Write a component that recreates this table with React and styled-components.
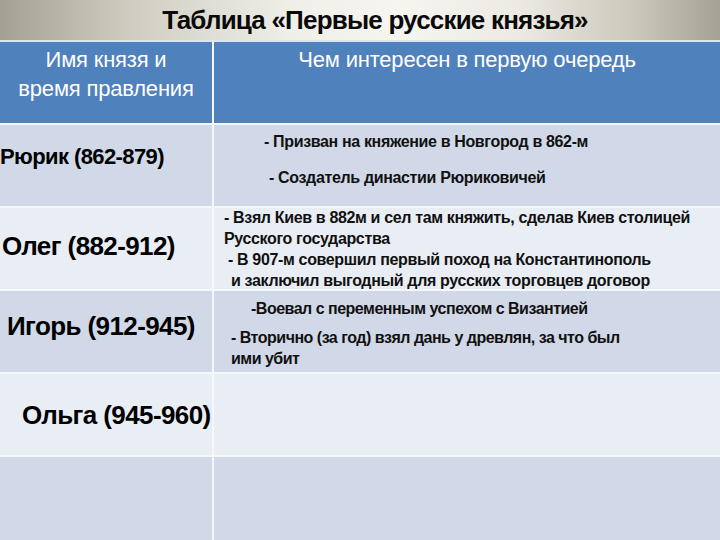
import React from "react";
import styled, { createGlobalStyle } from "styled-components";

const Global = createGlobalStyle`
  html, body { margin: 0; padding: 0; }
  body { width: 720px; height: 540px; overflow: hidden; background: #fff; font-family: "Liberation Sans", Arial, sans-serif; }
`;

const Slide = styled.div`
  width: 720px;
  height: 540px;
  display: flex;
  flex-direction: column;
  overflow: hidden;
`;

const TitleBar = styled.div`
  height: 40px;
  flex: none;
  display: flex;
  align-items: center;
  justify-content: center;
  padding-left: 30px;
  background: linear-gradient(90deg, #a3a192 0%, #cfcdc1 18%, #efeee7 40%, #f6f5f0 55%, #eceae2 72%, #cbc9bc 88%, #a4a294 100%);
`;

const Title = styled.h1`
  margin: 0;
  font-family: "Liberation Sans", Arial, sans-serif;
  font-weight: 700;
  font-size: 26px;
  line-height: 30px;
  letter-spacing: -0.8px;
  color: #0a0a0a;
`;

const Table = styled.div`
  flex: 1;
  display: grid;
  grid-template-columns: 212px 1fr;
  grid-template-rows: 81px repeat(4, 81px) 1fr;
  gap: 2px;
  background: #f4f7fb;
  border-top: 2px solid #dbe6f3;
`;

const HeadCell = styled.div`
  background: #4f81bd;
  color: #fff;
  font-family: "Liberation Sans", Arial, sans-serif;
  font-size: 22px;
  line-height: 29px;
  letter-spacing: -0.2px;
  text-align: center;
  padding-top: 3px;
  white-space: nowrap;
`;

const Cell = styled.div`
  background: ${(p) => (p.$odd ? "#d1d8e7" : "#e9edf4")};
  display: flex;
  flex-direction: column;
`;

const Name = styled.div`
  font-family: "Liberation Sans", Arial, sans-serif;
  font-weight: 700;
  font-size: ${(p) => p.$size || 25}px;
  line-height: ${(p) => p.$size || 25}px;
  letter-spacing: -0.6px;
  color: #000;
  white-space: nowrap;
  margin-top: ${(p) => p.$top}px;
  margin-left: ${(p) => p.$left}px;
`;

const Line = styled.div`
  font-family: "Liberation Sans", Arial, sans-serif;
  font-weight: 700;
  font-size: ${(p) => p.$size || 16}px;
  letter-spacing: ${(p) => (p.$tight ? -0.5 : -0.35)}px;
  line-height: 21px;
  color: #111;
  white-space: nowrap;
  margin-top: ${(p) => p.$top || 0}px;
  margin-left: ${(p) => p.$left}px;
`;

export default function App() {
  return (
    <Slide>
      <Global />
      <TitleBar>
        <Title>Таблица «Первые русские князья»</Title>
      </TitleBar>
      <Table>
        <HeadCell>
          Имя князя и
          <br />
          время правления
        </HeadCell>
        <HeadCell>Чем интересен в первую очередь</HeadCell>

        <Cell $odd>
          <Name $top={21} $left={0} $size={22}>Рюрик (862-879)</Name>
        </Cell>
        <Cell $odd>
          <Line $top={6} $left={50}>- Призван на княжение в Новгород в 862-м</Line>
          <Line $top={15} $left={55}>- Создатель династии Рюриковичей</Line>
        </Cell>

        <Cell>
          <Name $top={25} $left={2} $size={26}>Олег (882-912)</Name>
        </Cell>
        <Cell>
          <Line $top={-1} $left={10}>- Взял Киев в 882м и сел там княжить, сделав Киев столицей</Line>
          <Line $left={10}>Русского государства</Line>
          <Line $left={14}>- В 907-м совершил первый поход на Константинополь</Line>
          <Line $left={17}>и заключил выгодный для русских торговцев договор</Line>
        </Cell>

        <Cell $odd>
          <Name $top={22} $left={7} $size={26}>Игорь (912-945)</Name>
        </Cell>
        <Cell $odd>
          <Line $top={7} $left={37} $size={16} $tight>-Воевал с переменным успехом с Византией</Line>
          <Line $top={8} $left={17} $size={16} $tight>- Вторично (за год) взял дань у древлян, за что был</Line>
          <Line $left={17} $size={16} $tight>ими убит</Line>
        </Cell>

        <Cell>
          <Name $top={28} $left={22} $size={26}>Ольга (945-960)</Name>
        </Cell>
        <Cell />

        <Cell $odd />
        <Cell $odd />
      </Table>
    </Slide>
  );
}
